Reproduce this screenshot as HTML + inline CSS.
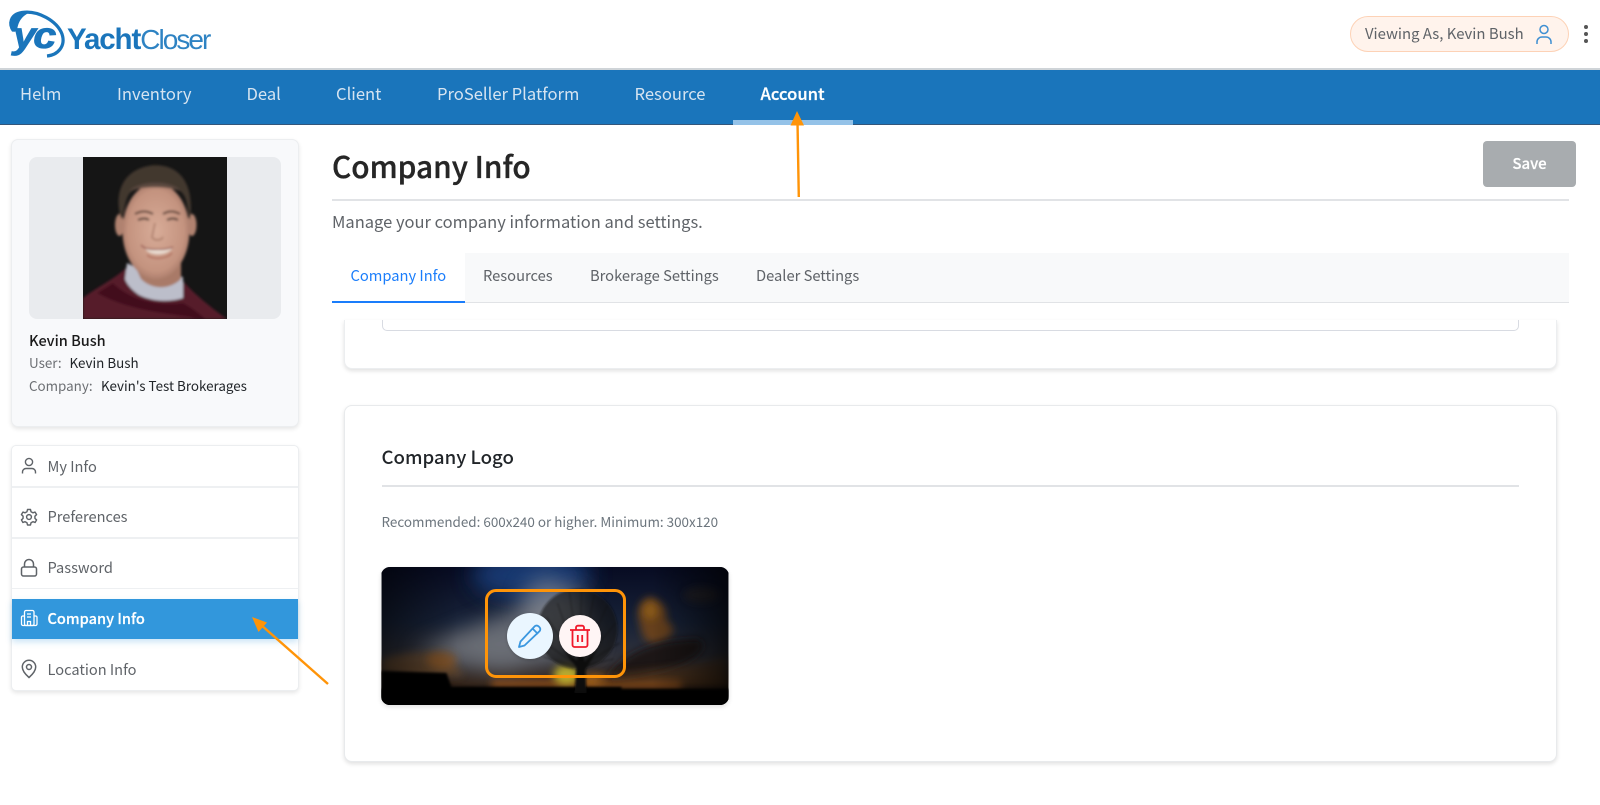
<!DOCTYPE html>
<html><head><meta charset="utf-8"><title>Company Info</title>
<style>
*{box-sizing:border-box;margin:0;padding:0}
html,body{width:1600px;height:805px;overflow:hidden;background:#fff}
body{position:relative;font-family:"Noto Sans CJK JP","Liberation Sans",sans-serif;color:#212529}
.a{position:absolute;white-space:nowrap}
.t{position:absolute;white-space:nowrap;line-height:24px;height:24px}
svg{position:absolute;display:block}
.nav{color:#d6e4f1;font-size:16.6px;top:81px}
.menu{color:#5f6368;font-size:14.6px;left:47.5px}
.tab{top:264px;font-size:14.7px;color:#5f6368}
</style></head><body>

<!-- logo -->
<svg style="left:0;top:0" width="70" height="70" viewBox="0 0 70 70">
<path d="M13.500 31C8.500 24 10 14.500 22 12.500C38 10 57 21 62 34C66 46 58 55 47 56" fill="none" stroke="#1a75bb" stroke-width="3.200"/>
<path d="M11 25C12 15 22 11 32 12C24 14 18 20 17 31L13.500 32Z" fill="#1a75bb"/>
<g transform="translate(13 48) scale(1.12 1)"><text x="0" y="0" font-family="Liberation Sans" font-weight="700" font-style="italic" font-size="37" letter-spacing="-2.500" fill="#1a75bb" stroke="#1a75bb" stroke-width=".8">yc</text></g>
</svg>
<div class="a" style="left:67px;top:22px;line-height:36px;font-family:'Liberation Sans',sans-serif;font-size:29.500px;letter-spacing:-1.100px;color:#1a75bb"><b>Yacht</b><span style="font-weight:400;font-size:28px;letter-spacing:-1.950px;color:#2e83c3">Closer</span></div>

<!-- viewing as -->
<div class="a" style="left:1350px;top:16px;width:219px;height:36px;border-radius:18px;background:#fff3ec;border:1px solid #fdd2b6"></div>
<div class="t" style="left:1365px;top:22px;font-size:14.900px;color:#5f6368">Viewing As, Kevin Bush</div>
<svg style="left:1533px;top:23px" width="22" height="22" viewBox="0 0 22 22" fill="none" stroke="#3f8fd2" stroke-width="1.500"><circle cx="11" cy="6.500" r="4"/><path d="M4 21v-2a5 5 0 0 1 5-5h4a5 5 0 0 1 5 5v2"/></svg>
<svg style="left:1580px;top:24px" width="12" height="20"><circle cx="6" cy="3" r="2" fill="#555"/><circle cx="6" cy="10" r="2" fill="#555"/><circle cx="6" cy="17" r="2" fill="#555"/></svg>

<!-- nav -->
<div class="a" style="left:0;top:68px;width:1600px;height:57px;background:#1a75bb;border-top:2px solid #cfd4d8;border-bottom:1.500px solid #33567a"></div>
<div class="a" style="left:733px;top:120px;width:120px;height:5px;background:#94c2e8"></div>
<div class="t nav" style="left:20px">Helm</div>
<div class="t nav" style="left:117px">Inventory</div>
<div class="t nav" style="left:246.500px">Deal</div>
<div class="t nav" style="left:336px">Client</div>
<div class="t nav" style="left:437px">ProSeller Platform</div>
<div class="t nav" style="left:634.500px">Resource</div>
<div class="t nav" style="left:760.500px;color:#fff;font-weight:500;-webkit-text-stroke:.25px #fff">Account</div>

<!-- profile card -->
<div class="a" style="left:11px;top:139px;width:288px;height:288px;background:#f8f9fb;border:1px solid #eceef0;border-radius:7px;box-shadow:0 2px 4px rgba(0,0,0,.1)"></div>
<div class="a" style="left:29px;top:157px;width:252px;height:162px;background:#e9ebee;border-radius:8px"></div>
<svg style="left:83px;top:157px" width="144" height="162" viewBox="0 0 144 162">
<defs><filter id="b1" x="-20%" y="-20%" width="140%" height="140%"><feGaussianBlur stdDeviation="1.300"/></filter><clipPath id="pc"><rect width="144" height="162"/></clipPath>
<radialGradient id="skin" cx=".5" cy=".5" r=".6"><stop offset="0" stop-color="#d8ac98"/><stop offset=".7" stop-color="#c4937f"/><stop offset="1" stop-color="#94695a"/></radialGradient></defs>
<rect width="144" height="162" fill="#151515"/>
<g clip-path="url(#pc)"><g filter="url(#b1)">
<path d="M0 141C14 130 32 122 44 110L100 124C112 138 130 152 144 162H0Z" fill="#571b2c"/>
<path d="M30 126C44 140 70 150 100 146C108 150 116 156 122 162H116C90 156 50 156 14 136Z" fill="#43111f"/>
<path d="M42 122L44 106L60 114L100 120L100 141C88 145 70 145 56 138C50 134 44 128 42 122Z" fill="#bcbeca"/>
<path d="M48 100L98 100L98 122C88 132 70 134 58 122Z" fill="#a97a68"/>
<ellipse cx="36.500" cy="68" rx="4.500" ry="11" fill="#b08270"/><ellipse cx="109" cy="68" rx="4.500" ry="11" fill="#b08270"/>
<ellipse cx="73" cy="74" rx="33.500" ry="48" fill="url(#skin)"/>
<path d="M38 62C31 38 38 13 68 8.500C96 6 112 26 107 63C104 52 105 40 97 34C82 27 60 27 48 35C41 42 43 52 38 62Z" fill="#43372e"/>
<path d="M46 34C58 23 88 23 98 34C84 29 60 29 46 34Z" fill="#5b4a40"/>
<path d="M52 57q9-5 18 0M80 57q8-5 17 0" stroke="#5a4035" stroke-width="2" fill="none"/>
<path d="M55 63q7-3 11 0M84 63q6-3 11 0" stroke="#4c372f" stroke-width="2" fill="none"/>
<path d="M72 66L69 80C71 84 78 84 80 80" stroke="#a97a68" stroke-width="1.500" fill="none"/>
<path d="M62 91C68 93 84 93 90 90C86 99 66 100 62 91Z" fill="#e9dbd0"/>
<path d="M58 88C60 90 62 91 62 91C68 93 84 93 90 90" stroke="#95524c" stroke-width="1.300" fill="none"/>
<path d="M64 98C70 103 84 102 89 96" stroke="#a9604f" stroke-width="1.300" fill="none"/>
</g></g></svg>
<div class="t" style="left:29px;top:329px;font-size:14.500px;font-weight:500;color:#1a1a1a">Kevin Bush</div>
<div class="t" style="left:29px;top:350px;font-size:13.400px;color:#6c6f73">User:</div>
<div class="t" style="left:69.500px;top:350px;font-size:13.400px;color:#212529">Kevin Bush</div>
<div class="t" style="left:29px;top:373px;font-size:13.400px;color:#6c6f73">Company:</div>
<div class="t" style="left:101px;top:373px;font-size:13.400px;color:#212529">Kevin's Test Brokerages</div>

<!-- side menu -->
<div class="a" style="left:11px;top:445px;width:288px;height:246px;background:#fff;border:1px solid #eceef0;border-radius:5px;box-shadow:0 2px 4px rgba(0,0,0,.1)"></div>
<div class="a" style="left:12px;top:486px;width:286px;height:1.500px;background:#eef0f2"></div>
<div class="a" style="left:12px;top:537px;width:286px;height:1.500px;background:#eef0f2"></div>
<div class="a" style="left:12px;top:588px;width:286px;height:1px;background:#eef0f2"></div>
<div class="a" style="left:12px;top:599px;width:286px;height:40px;background:#3297dc;box-shadow:0 3px 6px rgba(50,151,220,.25)"></div>
<svg style="left:20px;top:457px" width="18" height="18" viewBox="0 0 18 18" fill="none" stroke="#5f6368" stroke-width="1.400"><circle cx="9" cy="5" r="3.600"/><path d="M2.500 16.500v-1.500a3.500 3.500 0 0 1 3.500-3.500h6a3.500 3.500 0 0 1 3.500 3.500v1.500"/></svg>
<svg style="left:20px;top:508px" width="18" height="18" viewBox="0 0 24 24" fill="none" stroke="#5f6368" stroke-width="1.900" stroke-linejoin="round"><circle cx="12" cy="12" r="3.200"/><path d="M10 2h4l.7 3 2.500 1.400 2.900-1 2 3.400-2.200 2.100v2.900l2.200 2.100-2 3.400-2.900-1-2.500 1.400-.7 3h-4l-.7-3-2.500-1.400-2.900 1-2-3.400 2.200-2.100v-2.900L1.900 8.800l2-3.400 2.900 1L9.300 5z"/></svg>
<svg style="left:20px;top:558px" width="18" height="19" viewBox="0 0 18 19" fill="none" stroke="#5f6368" stroke-width="1.500"><rect x="1.500" y="9" width="15" height="9" rx="2"/><path d="M4.500 9V6a4.500 4.500 0 0 1 9 0v3"/></svg>
<svg style="left:20px;top:609px" width="18" height="18" viewBox="0 0 18 18" fill="none" stroke="#fff" stroke-width="1.300"><rect x="4.500" y="1.500" width="9.500" height="15" rx="1.500"/><path d="M4.500 7H2.500a1.500 1.500 0 0 0-1 1.400v6.600a1.500 1.500 0 0 0 1.500 1.500h12.500a1.500 1.500 0 0 0 1.500-1.500V8.400a1.500 1.500 0 0 0-1-1.400H14M7 5h4M7 8h4M7.500 16.500v-4h3v4"/></svg>
<svg style="left:21px;top:659px" width="16" height="20" viewBox="0 0 16 20" fill="none" stroke="#5f6368" stroke-width="1.500"><path d="M8 18.500C4 15 1.300 11.500 1.300 8a6.700 6.700 0 0 1 13.400 0c0 3.500-2.700 7-6.700 10.500z"/><circle cx="8" cy="8" r="2.500"/></svg>
<div class="t menu" style="top:455px">My Info</div>
<div class="t menu" style="top:505px">Preferences</div>
<div class="t menu" style="top:556px">Password</div>
<div class="t menu" style="top:607px;color:#fff;font-weight:500;-webkit-text-stroke:.2px #fff">Company Info</div>
<div class="t menu" style="top:658px">Location Info</div>

<!-- header -->
<div class="a" style="left:332px;top:142.500px;line-height:44px;font-size:29.800px;font-weight:500;-webkit-text-stroke:.35px #262626;color:#262626">Company Info</div>
<div class="a" style="left:332px;top:199px;width:1237px;height:1.500px;background:#e1e3e6"></div>
<div class="t" style="left:332px;top:209px;font-size:16.500px;color:#5f6368">Manage your company information and settings.</div>
<div class="a" style="left:1483px;top:141px;width:93px;height:46px;background:#a8acaf;border-radius:4px"></div>
<div class="t" style="left:1483px;top:152px;width:93px;text-align:center;font-size:15px;font-weight:500;-webkit-text-stroke:.2px #fff;color:#fff">Save</div>

<!-- tabs -->
<div class="a" style="left:332px;top:253px;width:1237px;height:50px;background:#f8f9fa;border-bottom:1.500px solid #e1e3e6"></div>
<div class="a" style="left:332px;top:253px;width:133px;height:49.500px;background:#fff;border-bottom:2.500px solid #1a7dfb"></div>
<div class="t tab" style="left:350.500px;color:#1a7dfb">Company Info</div>
<div class="t tab" style="left:483px">Resources</div>
<div class="t tab" style="left:590px">Brokerage Settings</div>
<div class="t tab" style="left:756px">Dealer Settings</div>

<!-- card 1 -->
<div class="a" style="left:344px;top:320px;width:1213px;height:49px;background:#fff;border:1px solid #eceef0;border-top:0;border-radius:0 0 8px 8px;box-shadow:0 2px 4px rgba(0,0,0,.12)"></div>
<div class="a" style="left:381.500px;top:320px;width:1137.500px;height:11px;border:1px solid #d8dbe2;border-top:0;border-radius:0 0 5px 5px"></div>

<!-- card 2 -->
<div class="a" style="left:344px;top:404.500px;width:1213px;height:357.500px;background:#fff;border:1px solid #e8eaec;border-radius:8px;box-shadow:0 2px 4px rgba(0,0,0,.12)"></div>
<div class="a" style="left:381.500px;top:442px;line-height:30px;font-size:18.600px;font-weight:500;color:#212529">Company Logo</div>
<div class="a" style="left:381.500px;top:485px;width:1137.500px;height:1.500px;background:#e1e3e6"></div>
<div class="t" style="left:381.500px;top:509px;font-size:13.450px;color:#6c757d">Recommended: 600x240 or higher. Minimum: 300x120</div>

<!-- logo image -->
<svg style="left:381px;top:567px;border-radius:9px;box-shadow:0 2px 5px rgba(0,0,0,.12)" width="348" height="138" viewBox="0 0 347 138">
<defs>
<linearGradient id="sky" x1="0" y1="0" x2="0" y2="1"><stop offset="0" stop-color="#070b22"/><stop offset=".4" stop-color="#172238"/><stop offset=".68" stop-color="#33333a"/><stop offset=".84" stop-color="#33241a"/><stop offset=".92" stop-color="#0b0604"/><stop offset="1" stop-color="#000"/></linearGradient>
<filter id="b4" x="-60%" y="-60%" width="220%" height="220%"><feGaussianBlur stdDeviation="4"/></filter>
<filter id="b8" x="-80%" y="-80%" width="260%" height="260%"><feGaussianBlur stdDeviation="11"/></filter>
<filter id="b2" x="-30%" y="-30%" width="160%" height="160%"><feGaussianBlur stdDeviation="1.200"/></filter>
<filter id="b5" x="-10%" y="-10%" width="120%" height="120%"><feGaussianBlur stdDeviation="1"/></filter>
<linearGradient id="edge" x1="0" x2="1"><stop offset="0" stop-color="#000" stop-opacity=".55"/><stop offset=".22" stop-color="#000" stop-opacity="0"/><stop offset=".78" stop-color="#000" stop-opacity="0"/><stop offset="1" stop-color="#000" stop-opacity=".7"/></linearGradient>
</defs>
<rect width="347" height="138" fill="url(#sky)"/>
<ellipse cx="150" cy="8" rx="60" ry="26" fill="#1a468a" opacity=".75" filter="url(#b8)"/>
<path d="M30 85L140 40L200 20L215 80L120 105Z" fill="#7b7f85" opacity=".8" filter="url(#b8)"/>
<ellipse cx="165" cy="38" rx="24" ry="28" fill="#8b9099" opacity=".6" filter="url(#b8)"/>
<rect x="110" y="113" width="190" height="8" fill="#b5601a" opacity=".65" filter="url(#b4)"/>
<ellipse cx="185" cy="108" rx="13" ry="10" fill="#b8aa2e" filter="url(#b4)"/>
<ellipse cx="212" cy="113" rx="12" ry="6" fill="#a8671c" opacity=".8" filter="url(#b4)"/>
<path d="M0 92Q25 84 50 85Q70 92 82 108L40 112L0 105Z" fill="#6d4b2b" opacity=".7" filter="url(#b4)"/>
<ellipse cx="60" cy="93" rx="15" ry="9" fill="#8a5420" opacity=".7" filter="url(#b4)"/>
<path d="M259 60C254 46 256 34 268 30C280 32 288 44 284 52C290 58 296 62 288 70C274 82 262 78 259 60Z" fill="#66401a" filter="url(#b4)"/>
<ellipse cx="269" cy="44" rx="7" ry="8" fill="#8a5a18" filter="url(#b4)"/>
<path d="M228 106C246 84 276 72 318 72C334 88 290 108 228 112Z" fill="#1b1712" filter="url(#b4)"/>
<path d="M215 110C260 100 300 104 345 90V118H215Z" fill="#5b3716" opacity=".5" filter="url(#b4)"/>
<ellipse cx="320" cy="28" rx="18" ry="8" fill="#2a2826" opacity=".7" filter="url(#b4)"/>
<g filter="url(#b2)"><path d="M0 104L65 106L70 120H240V138H0Z" fill="#020202"/></g>
<rect y="122" width="347" height="16" fill="#000" filter="url(#b2)"/>
<g filter="url(#b5)">
<ellipse cx="196" cy="62" rx="40" ry="40" fill="#141414" opacity=".62"/>
<path d="M193 126L195 100L182 84L196 94L199 70L203 95L216 82L204 103L205 126Z" fill="#0c0c0c"/>
<g stroke="#0d0d0d" stroke-width=".8" opacity=".6" fill="none"><path d="M198 100L165 50M198 100L176 36M198 100L188 25M198 100L200 22M198 100L213 27M198 100L226 38M198 100L235 55M198 100L238 76M198 100L158 72M198 100L162 90M198 100L232 92"/></g>
</g>
<rect width="347" height="138" fill="url(#edge)"/>
</svg>

<!-- action annotation -->
<div class="a" style="left:485px;top:589px;width:141px;height:89px;border:3px solid #ff9408;border-radius:11px"></div>
<div class="a" style="left:506.500px;top:613px;width:46px;height:46px;border-radius:50%;background:#eaf6ff;box-shadow:0 1px 3px rgba(0,0,0,.2)"></div>
<div class="a" style="left:559px;top:615px;width:42px;height:42px;border-radius:50%;background:#fff5f5;box-shadow:0 1px 3px rgba(0,0,0,.2)"></div>
<svg style="left:517px;top:623px" width="26" height="26" viewBox="0 0 26 26" fill="none" stroke="#3a97e0" stroke-width="1.800" stroke-linejoin="round"><path d="M2 24l1.500-5.500L17.500 3.500a2.800 2.800 0 0 1 4-.2l1 1a2.800 2.800 0 0 1-.1 4L7.500 22.500z"/><path d="M15.500 5.500l5.500 5.500"/></svg>
<svg style="left:569px;top:624px" width="22" height="24" viewBox="0 0 22 24" fill="none" stroke="#f0182a" stroke-width="1.800" stroke-linejoin="round"><path d="M1 6h20M7 6V3.500A1.800 1.800 0 0 1 8.800 1.700h4.400A1.800 1.800 0 0 1 15 3.500V6M3.500 6v15a2 2 0 0 0 2 2h11a2 2 0 0 0 2-2V6M8.800 11v7M13.200 11v7"/></svg>

<!-- arrows -->
<svg style="left:0;top:0;pointer-events:none" width="1600" height="805" fill="none">
<path d="M798.800 197L797.500 122" stroke="#ff9408" stroke-width="2.400"/>
<path d="M797 111L790.500 125.500H804Z" fill="#ff9408"/>
<path d="M328 684L260 624" stroke="#ff9408" stroke-width="2.400"/>
<path d="M252 617L267 622.500L258.500 632Z" fill="#ff9408"/>
</svg>
</body></html>
